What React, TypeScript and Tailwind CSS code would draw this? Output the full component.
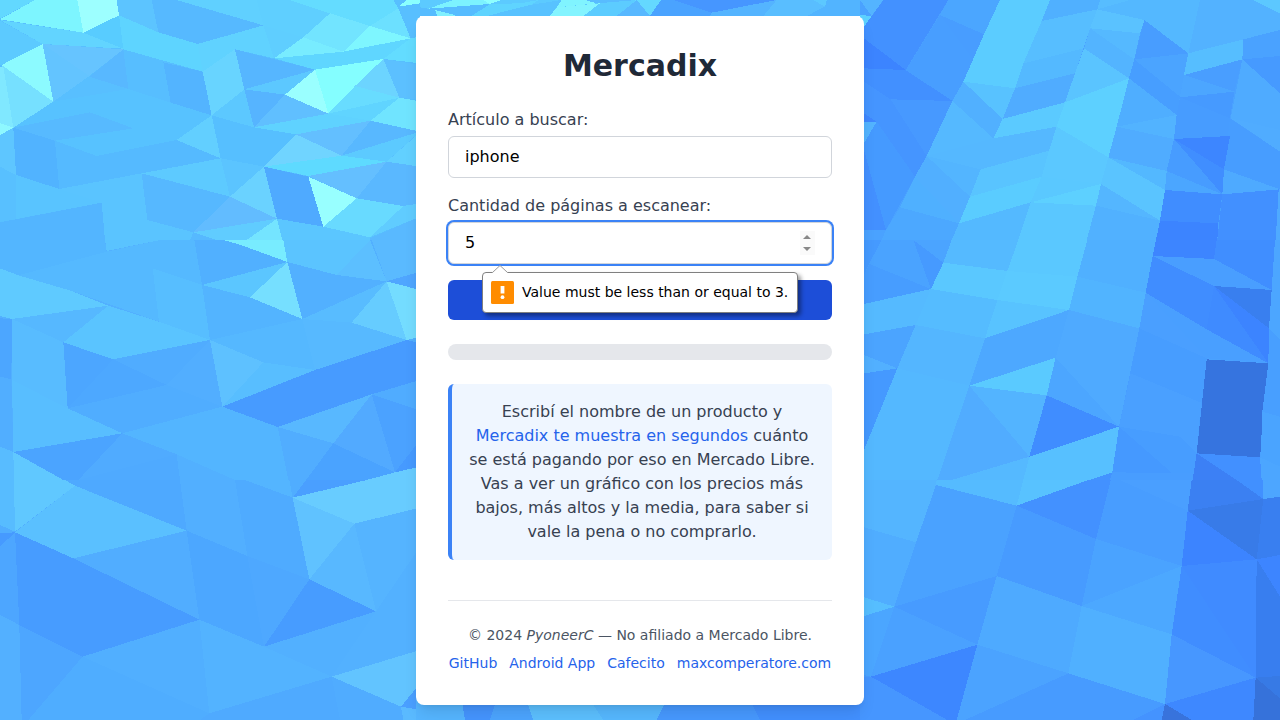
import React, { useState } from "react";

type Region = { x: number; y: number; facets: string };

// Each line is "<colour> <polygon points>", in thirds of a pixel from the region's origin.
const regions: Region[] = [
  {
    x: 0,
    y: 0,
    facets: `
57bfff 0,0 1260,0 1260,720 0,720
62d8ff 0,0 105,0 0,56
7df5ff 0,58 105,0 232,0 250,98
9dffff 232,0 350,0 357,46 250,98
62d4ff 0,60 250,98 370,146 128,132
5ccaff 0,62 128,132 5,195 0,195
8cfaff 5,195 128,132 160,305
76e0ff 5,195 160,305 40,383
80e8ff 0,200 10,200 40,383 0,370
8ef8ff 0,370 40,383 0,405
63c4ff 128,132 268,228 160,305
66c4ff 128,132 370,148 268,228
58ccff 357,46 475,97 370,146 250,98
5cc4ff 350,0 455,0 475,97 357,46
56b9ff 455,0 530,0 790,76 593,132 475,97
60d0ff 530,0 770,0 790,76
5ed4ff 357,46 475,97 593,132 608,215 370,148
57beff 370,148 490,187 512,308 385,267
58b8ff 370,148 385,267 268,230
58bfff 268,230 385,267 160,305
53b4ff 490,187 608,215 635,346 512,308
68d4ff 608,215 705,148 733,268 635,346
56b6ff 705,148 945,209 733,268
60d2ff 593,132 790,76 822,175 705,148 608,215
5fcfff 770,0 870,0 990,40 910,112 790,76
5fceff 790,76 910,112 822,175
64dcff 870,0 1180,0 1195,25 1110,78 990,40
72e4ff 910,112 990,40 1110,78 1030,155
78ecff 822,175 910,112 1030,155
6ce0ff 1110,78 1195,25 1232,115
7ef6ff 1110,78 1232,115 1030,155
58bfff 1195,20 1260,8 1260,110 1232,115
8affff 1195,20 1220,0 1260,0 1260,10
5fd6ff 822,175 1030,155 1232,115 1150,177 945,209
63dcff 1232,115 1260,110 1260,190 1150,177
9affff 855,284 945,209 985,341
84feff 945,209 1150,177 985,341
5cc8ff 733,268 945,209 855,284
56b4ff 733,268 855,284 762,382
60bfff 855,284 985,341 762,382
6cd4ff 1065,258 1150,177 1198,293
5cc0ff 1150,177 1260,195 1260,300 1198,293
68dcff 985,341 1065,258 1198,293
60d4ff 985,341 1198,293 1112,362
5fd2ff 762,382 985,341 1112,362 888,403
70e4ff 1198,293 1260,304 1260,395 1112,362
63bfff 888,403 1112,362 1025,467
58b8ff 1112,362 1260,395 1025,467
70d4ff 888,403 1025,467 792,500
5edaff 792,500 1025,467 1160,485 925,528
5ccaff 1025,467 1260,395 1160,485
62d0ff 1160,485 1260,397 1260,500
64bfff 925,528 1160,485 1070,595
5ab8ff 1160,485 1260,500 1260,610 1210,618 1070,595
98ffff 925,530 1070,595 970,680
4faaff 792,500 925,530 970,680 831,656
6ad2ff 690,590 792,500 831,656
62bcff 690,590 831,656 580,697
56bfff 635,346 762,382 888,403 792,500 662,475
62cfff 530,420 635,346 662,475
5cc8ff 635,346 733,268 762,382
5bc4ff 662,475 792,500 690,590
5dcaff 425,520 662,475 690,590
56b8ff 425,520 690,590 580,697 442,660
60ccff 580,697 831,656 740,720 650,720
74e4ff 831,656 740,720 847,720
5bc6ff 831,656 970,680 1110,712 1110,720 847,720
68daff 970,680 1070,595 1210,618 1110,712
60ccff 1110,712 1210,618 1260,610 1260,650
59b9ff 1110,715 1260,650 1260,720 1110,720
57c2ff 40,383 160,305 385,267 512,308 635,346 530,420 290,468 165,422
57baff 165,422 40,383 270,337 400,385
51b3ff 40,383 165,422 178,567 48,525
55baff 165,422 290,468 530,420 662,475 178,567
5ec6ff 0,405 40,383 48,525 0,500
58c0ff 0,500 48,525 48,657 0,665
59c4ff 48,525 178,567 305,608 48,657
5ac4ff 178,567 425,520 442,660 580,697 570,720 315,720 305,608
53b5ff 0,667 305,608 315,720 0,720
56b9ff 570,720 580,697 650,720`,
  },
  {
    x: 0,
    y: 240,
    facets: `
52b0ff 0,0 1260,0 1260,720 0,720
53b6ff 0,0 315,0 320,35 55,106 0,85
5ac3ff 315,0 480,0 320,33
5fcaff 0,85 55,106 215,153 325,197 36,237 0,228
55b9ff 55,106 320,35 480,0 583,0 606,135 630,300 477,245 215,153
57beff 458,85 606,135 630,300 477,245
51b0ff 583,0 670,0 720,14 862,66 606,135
78ecff 670,0 850,0 862,66 720,14
5bc6ff 606,135 862,66 750,172
76dfff 750,172 862,66 907,237
53b4ff 606,135 750,172 907,237 630,300
5bc4ff 850,0 1110,0 1010,105 862,66
5cbfff 1110,0 1160,124 1010,105
5abaff 1115,0 1260,0 1260,95 1160,124
52b0ff 862,66 1010,105 1160,124 907,237
4fa6ff 1160,124 1260,95 1260,150
74dcff 1160,124 1260,150 1260,290 1220,300
66ccff 1055,248 1160,124 1220,300
58bcff 907,237 1160,124 1055,248
57b9ff 907,237 1055,248 1220,300 945,390
55b8ff 630,300 907,237 945,390 790,367
5ec1ff 630,300 790,367 667,500
58beff 790,367 945,390 667,500
479bff 667,500 945,390 1220,300 1260,310 1260,420 1115,463 833,561
58b8ff 833,561 1115,463 1000,610
50acff 1115,463 1260,420 1260,512
4ba2ff 1115,463 1260,512 1260,600 1185,697
52aaff 1000,610 1115,463 1185,697
51adff 833,561 1000,610 918,720 865,720
4aa3ff 918,720 1000,610 1185,697 1100,720
68ccff 1100,720 1185,697 1260,680 1260,720
469aff 1185,697 1260,600 1260,680
4ca6ff 190,307 340,358 203,505
50acff 340,358 630,300 500,435
4da8ff 340,358 500,435 203,505
52aeff 500,435 630,300 667,500
56b8ff 36,237 325,197 190,307
5ac4ff 325,197 477,245 630,300 340,358 190,307
58bcff 36,237 190,307 203,505 36,420
58beff 36,420 203,505 367,580 40,636
4ca6ff 0,235 36,237 34,418 0,410
51aeff 0,410 34,418 40,636 0,620
50adff 203,505 500,435 667,500 367,580
53b5ff 367,580 667,500 833,561 865,720 705,720 530,643
4ba4ff 40,636 367,580 235,720 190,720
50abff 235,720 367,580 530,643
4faaff 530,643 540,720 235,720
52b0ff 530,643 705,720 540,720
58bcff 0,620 40,636 42,720 0,720
60c8ff 40,636 190,720 42,720`,
  },
  {
    x: 0,
    y: 480,
    facets: `
50adff 0,0 1260,0 1260,720 0,720
57bcff 0,0 42,0 45,155 0,135
60c8ff 42,0 195,0 225,17 45,155
5ac0ff 225,17 560,152 220,235 45,157
4ea9ff 195,0 540,0 560,152 225,17
52afff 540,0 705,0 742,228 560,152
4fabff 705,0 735,0 878,53 928,298 742,228
54b5ff 735,0 868,0 878,53
4a9fff 878,53 918,0 1100,0
68ccff 878,53 1100,0 1260,0 1260,83 1063,131
60c2ff 878,53 1063,131 928,298
58b8ff 1063,131 1128,394 928,298
55b4ff 1063,131 1260,83 1260,200 1128,394
479cff 928,298 1128,394 792,500
4ca7ff 560,152 742,228 792,500 598,419
4ea8ff 742,228 928,298 792,500
51adff 220,235 560,152 598,419
479cff 45,157 220,235 598,419 248,530 58,435
469aff 0,160 45,157 0,200
4da6ff 0,200 45,157 58,435 0,405
53b0ff 0,405 58,435 65,720 0,720
4da6ff 58,435 248,530 85,720 65,720
51afff 248,530 598,419 628,700
4fadff 85,720 248,530 628,700 600,720
53b3ff 598,419 792,500 995,590 628,700
52b0ff 792,500 1128,394 995,590
53b1ff 1128,394 1260,200 1260,510 995,590
62c4ff 995,590 1260,510 1260,610 1203,680
4faaff 628,700 995,590 1020,720 600,720
50acff 995,590 1203,680 1210,720 1020,720
4a9fff 1203,680 1260,610 1260,690
5abaff 1203,680 1260,690 1260,720 1210,720`,
  },
  {
    x: 860,
    y: 0,
    facets: `
4aa2ff 0,0 1260,0 1260,720 0,720
54b4ff 0,0 70,0 35,48
5cd0ff 0,45 35,48 12,80 0,80
4391ff 70,0 265,0 137,210 12,115 12,80
3c84ff 12,115 137,210 12,205
4290ff 12,205 137,210 277,303 92,298 12,245
4595ff 12,245 92,298 200,468 165,530 12,350
4799ff 92,298 277,303 200,468
3f88ff 12,340 50,365 12,365
489dff 240,45 265,0 420,0 372,103 310,245 277,303 137,210
4ba6ff 265,0 420,0 372,103 240,45
489eff 240,45 340,180 310,245 277,303 137,210
53b4ff 12,365 50,365 12,430
459aff 12,430 50,365 165,530 78,690 12,580
4390ff 12,450 78,690 12,690
5bccff 420,0 570,0 545,63 490,190 465,265 310,245 372,103
50b0ff 545,63 570,0 720,0 712,28
57beff 545,63 712,28 690,85 645,220 490,190
54b9ff 490,190 670,145 645,220 465,265
5cc8ff 720,0 810,0 712,28
5ac2ff 712,28 853,60 840,100 690,85
55b9ff 690,85 840,100 823,178
53b4ff 690,85 823,178 807,235 672,145
5ac4ff 672,145 807,235 615,307 645,220
50acff 465,265 645,220 615,307 428,357
5bcaff 428,357 615,307 590,380 400,415
58c2ff 310,245 465,265 428,357
51b0ff 277,303 310,245 428,357 400,415
5dd0ff 615,307 807,235 770,380 745,472 590,380
55b9ff 277,303 400,415 200,468
55b8ff 200,468 400,415 590,380 567,452 362,508
53b5ff 200,468 362,508 330,590
51afff 165,530 200,468 330,590 297,670
4fb0ff 120,622 165,530 297,670
4ca8ff 78,690 120,622 297,670 275,720 65,720
59c4ff 362,508 567,452 545,530 330,590
5accff 330,590 545,530 512,607 297,670
5bc8ff 567,452 590,380 745,472 723,552 545,530
5ac8ff 545,530 723,552 512,607
5dd0ff 512,607 723,552 708,617
54b9ff 297,670 512,607 475,720 275,720
5ac7ff 512,607 708,617 680,720 475,720
5ac4ff 723,552 745,472 915,570 900,662
54b6ff 723,552 900,662 708,617
51b1ff 708,617 900,662 890,720 680,720
54b8ff 712,28 720,0 1020,0 985,160 853,60
57bdff 720,0 810,0 712,28
53b2ff 1020,0 1180,0 1260,40 1260,90 1150,118 985,160
5cc8ff 1180,0 1260,0 1260,40
489dff 853,60 985,160 823,178
4ba4ff 823,178 985,160 972,225 960,290
479eff 807,235 823,178 960,290 950,345
56beff 985,160 1150,118 1147,178 972,225
4aa2ff 1150,118 1260,90 1260,168 1147,178
469aff 1147,178 1260,168 1260,280
499eff 972,225 1147,178 1123,275
4ca6ff 972,225 1123,275 960,292
469aff 960,292 1123,275 1110,355
479cff 960,292 1110,355 1108,408 942,417 950,345
4fabff 1147,178 1260,280 1260,390 1112,355
50acff 1112,355 1260,390 1260,455
479dff 1110,355 1260,455 1260,568 1092,508
3d86ff 942,417 1110,408 1092,508
408eff 942,417 1092,508 1087,583
479cff 942,417 1087,583 920,513
4faeff 770,380 807,235 950,345
52b3ff 770,380 950,345 942,417
50acff 745,472 770,380 942,417 920,513
53b8ff 745,472 920,513 915,570
4ba6ff 920,513 1087,583 915,570
4eaaff 1092,508 1260,568 1087,583
408dff 915,570 1087,583 1075,670 900,662
3c84ff 900,662 1075,670 1072,720 888,720
4290ff 1087,583 1260,568 1247,720 1072,720
4faaff 1256,568 1260,568 1260,720 1247,720`,
  },
  {
    x: 860,
    y: 240,
    facets: `
4aa2ff 0,0 1260,0 1260,720 0,720
459aff 12,0 65,0 28,70 12,105
4aa3ff 65,0 160,0 213,147 28,72
4ba4ff 160,0 275,0 250,68
469aff 160,0 250,68 213,147
479dff 12,105 28,72 213,147 12,192
55baff 12,192 213,147 167,255 12,283
4ba4ff 12,283 167,255 112,385 12,345
52b0ff 12,345 112,385 12,400
4599ff 12,400 112,385 12,630
55baff 275,0 475,0 442,93 250,68
5ac8ff 475,0 682,0 652,110 442,93
5ac8ff 250,68 442,93 412,180 213,147
5bcaff 442,93 652,110 627,210 412,180
55bcff 213,147 412,180 375,295 167,255
58c3ff 412,180 627,210 375,295
50b0ff 682,0 888,0 857,158 652,110
51b4ff 652,110 857,158 838,265 627,210
4faaff 627,210 838,265 777,560 587,353
4da8ff 375,295 627,210 587,353 328,437
5acaff 328,437 587,353 560,466
54b6ff 167,255 375,295 328,437 112,385
54b8ff 112,385 328,437 232,720 12,720 12,630
51acff 328,437 508,650 275,720 232,720
53b4ff 328,437 560,466 508,650
408dff 560,466 777,560 508,650
4ca6ff 587,353 777,560 560,466
57c0ff 508,650 777,560 757,697 690,720 490,720
55b9ff 275,720 508,650 490,720
479dff 838,265 1040,355 1010,640 998,720 757,697 777,560
4aa0ff 812,400 1023,488 1010,638 960,590 777,560
4599ff 777,560 960,720 757,697
4a9fff 857,158 1040,355 838,265
3d85ff 888,0 1070,0 1062,57 878,48
408eff 1070,0 1245,0 1235,150 1062,57
499eff 878,48 1062,57 1235,150 1062,138
408dff 878,48 1062,138 1040,268 857,158
499fff 857,158 1040,268 1225,370 1040,355
397fef 1062,138 1235,150 1227,265
3c84ff 1062,138 1227,265 1225,370
3f8bff 1062,138 1225,370 1040,268
3674df 1040,358 1225,370 1200,652 1010,640
4ca6ff 1245,0 1260,0 1260,300 1227,265 1235,150
489fff 1227,265 1260,300 1260,530 1207,515 1225,370
4aa4ff 1207,515 1260,530 1260,680 1202,655
4290ff 1010,640 1200,652 1205,720 1130,720
3c80f5 1010,640 1130,720 998,720
4ca6ff 1200,652 1260,680 1260,720 1205,720
4393ff 690,720 757,697 750,720
489dff 757,697 998,700 998,720 750,720`,
  },
  {
    x: 860,
    y: 480,
    facets: `
489dff 0,0 1260,0 1260,720 0,720
54b5ff 12,0 230,0 228,15 168,187 12,142
50adff 12,142 168,187 103,380 12,352
56beff 12,352 103,380 12,408
4ba6ff 12,408 103,380 33,590 12,585
55bbff 230,0 490,0 470,77 228,15
58c2ff 490,0 685,0 470,77
4aa2ff 228,15 470,77 410,288 103,380 168,187
4391ff 470,77 685,0 752,0 708,177
479bff 470,77 708,177 665,378 410,288
479bff 103,380 410,288 352,494
4aa1ff 103,380 352,494 33,590
3d87ff 33,590 352,494 290,720 262,720
4696ff 0,590 33,590 262,720 0,720
489dff 752,0 995,0 965,258 708,177
4a9fff 780,0 995,0 983,92
4aa3ff 708,177 965,258 665,378
4ca8ff 665,378 965,258 935,463
4eaaff 410,288 665,378 625,580 352,494
50b0ff 665,378 935,463 915,672 625,580
4ba3ff 352,494 625,580 315,720 290,720
479bff 625,580 915,672 820,720 315,720
3b80f2 995,0 1130,0 1210,57 983,92
4190ff 1130,0 1208,0 1210,57
4da6ff 1208,0 1260,0 1260,50 1210,57
387be8 983,92 1210,57 1190,238
3c84ff 983,92 1190,238 965,258
408bff 965,258 1190,238 1187,593
408dff 965,258 1187,593 935,463
4797ff 935,463 1187,593 915,672
3e88ff 915,672 1187,593 1180,720 995,720
3873dc 915,672 995,720 905,720
397ff0 1210,57 1260,50 1260,225 1190,238
3d85ff 1190,238 1260,225 1260,350
387eef 1190,238 1260,350 1260,588 1187,593
377ae5 1187,593 1260,588 1260,655
3672da 1187,593 1260,655 1260,720 1180,720
4493ff 820,720 915,672 905,720`,
  },
  {
    x: 410,
    y: 0,
    facets: `
5ccaff 30,0 1350,0 1350,48 30,48
7cf2ff 55,26 130,0 220,0 240,12
8effff 220,0 275,0 240,12
56bcff 30,22 55,26 240,12 185,48 30,48
80f0ff 75,30 130,44 140,48 82,48
5fd4ff 240,12 330,10 385,0 365,14 230,48 185,48
58c2ff 365,14 455,0 420,48 230,48
80f4ff 455,0 525,0 560,10 440,22
84f4ff 440,22 570,10 520,48 420,48
58bcff 525,0 680,0 560,10
5cccff 570,10 680,0 620,48 520,48
64d8ff 675,0 753,0 720,48
58b8ff 680,0 720,48 620,48
4aa3ff 753,0 1100,0 905,38 900,48 720,48
4696ff 790,0 1100,0 905,38
54b4ff 905,38 1100,0 1060,48 900,48
59beff 1100,0 1210,0 1245,20 1190,48 1060,48
5cc8ff 1210,0 1250,0 1245,20
52b4ff 1250,0 1350,0 1350,48 1190,48 1245,20`,
  },
  {
    x: 410,
    y: 590,
    facets: `
4ca5ff 30,330 1350,330 1350,390 30,390
55b5ff 18,330 155,330 165,390 18,390
4595ff 155,330 260,330 240,390 165,390
5cc0ff 350,330 540,330 580,390 370,390
56b8ff 540,330 770,330 740,390 580,390
4799ff 770,330 1020,330 1050,390 740,390
4290ff 1020,330 1350,330 1350,390 1050,390`,
  },
];

function Backdrop() {
  return (
    <svg
      className="absolute inset-0 h-full w-full"
      viewBox="0 0 1280 720"
      preserveAspectRatio="none"
      shapeRendering="crispEdges"
      aria-hidden="true"
    >
      {regions.map(({ x, y, facets }, i) => (
        <g key={i} transform={`translate(${x} ${y}) scale(0.333333)`}>
          {facets
            .trim()
            .split("\n")
            .map((line, j) => (
              <polygon key={j} fill={`#${line.slice(0, 6)}`} points={line.slice(7)} />
            ))}
        </g>
      ))}
    </svg>
  );
}

function Spinner({ onStep }: { onStep: (delta: number) => void }) {
  return (
    <div className="flex h-6 w-[15px] flex-col bg-[#fafafa]">
      <button type="button" className="flex h-3 items-center justify-center pr-px" onClick={() => onStep(1)}>
        <svg width="8" height="4" viewBox="0 0 8 4" className="fill-[#888]">
          <path d="M4 0 8 4H0z" />
        </svg>
      </button>
      <button type="button" className="flex h-3 items-center justify-center pr-px" onClick={() => onStep(-1)}>
        <svg width="8" height="4" viewBox="0 0 8 4" className="fill-[#888]">
          <path d="M0 0h8L4 4z" />
        </svg>
      </button>
    </div>
  );
}

function ValidationBubble() {
  return (
    <div className="absolute top-[49px] left-[33px] flex h-[41px] w-[316px] items-center rounded-[4px] border border-[#808080] bg-white pl-2 shadow-[3px_3px_4px_rgba(0,0,0,0.4)]">
      <svg className="absolute -top-2 left-[9px]" width="16" height="9" viewBox="0 0 16 9">
        <path d="M0 9V8L8 .5 16 8v1z" fill="#fff" />
        <path d="M0 7.5h.5L8 .5l7.5 7h.5" fill="none" stroke="#999" />
      </svg>
      <svg width="23" height="23" viewBox="0 0 23 23" className="shrink-0">
        <rect width="23" height="23" rx="1.5" fill="#ff8c00" />
        <path d="M9.6 5h3.8v7.5H9.6z" fill="#fff" />
        <circle cx="11.5" cy="16.2" r="1.9" fill="#fff" />
      </svg>
      <span className="ml-2 pb-0.5 text-sm whitespace-nowrap text-black">Value must be less than or equal to 3.</span>
    </div>
  );
}

const links = ["GitHub", "Android App", "Cafecito", "maxcomperatore.com"];

export default function App() {
  const [query, setQuery] = useState("iphone");
  const [pages, setPages] = useState("5");

  return (
    <div className="relative flex h-[720px] justify-center overflow-hidden pt-4 font-['DejaVu_Sans',sans-serif]">
      <Backdrop />
      <main className="relative h-[689px] w-[448px] shrink-0 rounded-lg bg-white p-8 shadow-lg">
        <h1 className="mb-6 text-center text-3xl font-bold text-[#1f2937]">Mercadix</h1>
        <form className="flex flex-col gap-4" onSubmit={(e) => e.preventDefault()}>
          <label className="block text-[#374151]">
            <span className="block">Artículo a buscar:</span>
            <input
              className="mt-1 block h-[42px] w-full rounded-md border border-[#d1d5db] px-4 pt-[7px] pb-[9px] text-black outline-none"
              value={query}
              onChange={(e) => setQuery(e.target.value)}
            />
          </label>
          <div className="text-[#374151]">
            <label htmlFor="pages" className="block">
              Cantidad de páginas a escanear:
            </label>
            <div className="relative z-10 mt-1 flex h-[42px] items-center rounded-md border border-[#d1d5db] bg-white px-4 ring-2 ring-[#3b82f6]">
              <input
                id="pages"
                className="min-w-0 flex-1 text-black outline-none"
                value={pages}
                onChange={(e) => setPages(e.target.value)}
              />
              <Spinner onStep={(d) => setPages(String(Number(pages) + d))} />
              <ValidationBubble />
            </div>
          </div>
          <button type="submit" aria-label="Buscar" className="h-10 w-full rounded-md bg-[#1d4ed8]" />
        </form>
        <div className="mt-6 h-4 rounded-full bg-[#e5e7eb]" />
        <p className="mt-6 rounded-md border-l-4 border-[#3b82f6] bg-[#eff6ff] p-4 text-center text-[#374151]">
          Escribí el nombre de un producto y <span className="text-[#2563eb]">Mercadix te muestra en segundos</span>{" "}
          cuánto se está pagando por eso en Mercado Libre. Vas a ver un gráfico con los precios más bajos, más altos y
          la media, para saber si vale la pena o no comprarlo.
        </p>
        <footer className="mt-10 border-t border-[#e5e7eb] pt-6 text-center text-sm text-[#4b5563]">
          <p>
            © 2024 <em>PyoneerC</em> — No afiliado a Mercado Libre.
          </p>
          <nav className="mt-2 flex justify-center gap-3 text-[#2563eb]">
            {links.map((name) => (
              <a key={name} href="#">
                {name}
              </a>
            ))}
          </nav>
        </footer>
      </main>
    </div>
  );
}
